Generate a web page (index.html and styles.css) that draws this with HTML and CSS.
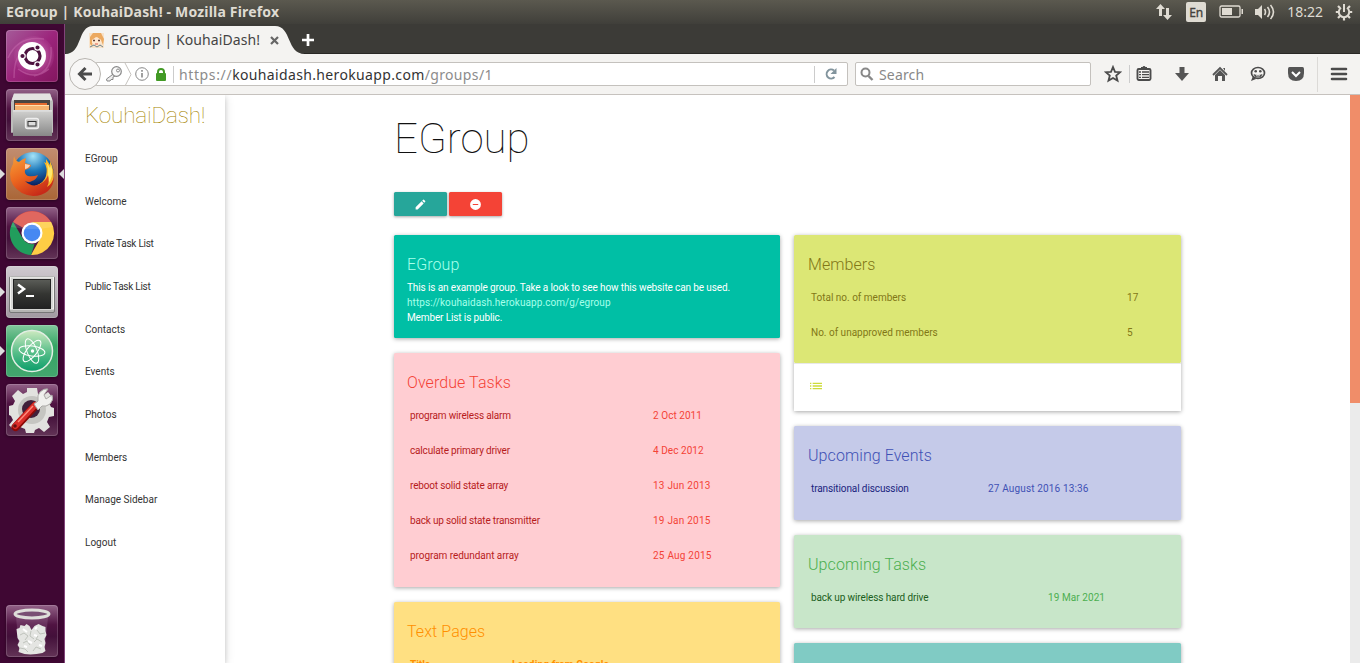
FILE: index.html
```html
<!DOCTYPE html>
<html lang="en">
<head>
<meta charset="utf-8">
<title>EGroup | KouhaiDash!</title>
<link rel="stylesheet" href="styles.css">
</head>
<body>
<svg class="defs" width="0" height="0">
  <defs>
    <linearGradient id="metal" x1="0" y1="0" x2="0" y2="1"><stop offset="0" stop-color="#d2d2d0"/><stop offset="1" stop-color="#888"/></linearGradient>
    <radialGradient id="globe" cx=".5" cy=".1" r=".8"><stop offset="0" stop-color="#a5e3f8"/><stop offset=".45" stop-color="#1c78ba"/><stop offset=".9" stop-color="#0a1d5c"/></radialGradient>
    <linearGradient id="fox" x1="0" y1="0" x2=".6" y2="1"><stop offset="0" stop-color="#f6a13b"/><stop offset=".5" stop-color="#ec671f"/><stop offset="1" stop-color="#c72a18"/></linearGradient>
    <linearGradient id="screen" x1="0" y1="0" x2="0" y2="1"><stop offset="0" stop-color="#5b5d58"/><stop offset=".5" stop-color="#343532"/><stop offset="1" stop-color="#222"/></linearGradient>
    <linearGradient id="atom" x1="0" y1="0" x2="0" y2="1"><stop offset="0" stop-color="#cdeac0"/><stop offset=".55" stop-color="#55bd88"/><stop offset="1" stop-color="#0a9d6a"/></linearGradient>
    <radialGradient id="swirl"><stop offset="0" stop-color="#e6a2d4"/><stop offset="1" stop-color="#c45aa8" stop-opacity=".15"/></radialGradient>
  </defs>
</svg>
<div class="desktop">
  <header class="panel">
    <span class="panel-title">EGroup | KouhaiDash! - Mozilla Firefox</span>
    <div class="tray">
      <svg class="net" width="18" height="18" viewBox="0 0 18 18" fill="#dfdbd2"><path d="M5.500 1 1 6h3v7h3V6h3zM12.500 17 8 12h3V5h3v7h3z"/></svg>
      <span class="lang">En</span>
      <svg class="bat" width="25" height="14" viewBox="0 0 25 14"><rect x="1" y="1" width="20" height="11" rx="1.500" fill="none" stroke="#dfdbd2" stroke-width="1.300"/><path d="M3 3h10v7H3zM22.500 4h1.500v5h-1.500z" fill="#dfdbd2"/></svg>
      <svg class="vol" width="21" height="18" viewBox="0 0 21 18"><path d="M1 6h3l4-4v14l-4-4H1z" fill="#dfdbd2"/><path d="M10.500 6q2 3 0 6M13.500 4q4 5 0 10M16.500 2q6 7 0 14" fill="none" stroke="#dfdbd2" stroke-width="1.600"/></svg>
      <span class="clock">18:22</span>
      <svg class="cog" width="18" height="18" viewBox="0 0 18 18" fill="none" stroke="#dfdbd2"><path d="M6 4.800a5.200 5.200 0 1 0 6 0" stroke-width="2"/><path d="M9 1v8" stroke-width="2"/><path d="m3 3 2 2M15 3l-2 2M.8 9h3M14.200 9h3M3 15l2-2M15 15l-2-2M9 14v3.500" stroke-width="2.200"/></svg>
    </div>
  </header>

  <nav class="launcher">
    <div class="tile dash"><svg viewBox="0 0 52 52"><circle cx="28" cy="26" r="20" fill="url(#swirl)"/><path d="M2 28Q12 5 38 9M8 48Q8 30 14 24M28 46Q47 42 45 17M12 39Q28 51 43 39" fill="none" stroke="#d782bd" stroke-width="1.500" opacity=".35"/><circle cx="26" cy="26" r="14" fill="#fff"/><circle cx="26.500" cy="26" r="7.500" fill="none" stroke="#4d123f" stroke-width="3.200"/><g fill="#4d123f" stroke="#fff" stroke-width="1.200"><circle cx="16.500" cy="26" r="2.700"/><circle cx="31.500" cy="17.500" r="2.700"/><circle cx="31.500" cy="34.500" r="2.700"/></g></svg></div>
    <div class="tile glass"><svg viewBox="0 0 52 52"><path d="m8 5 36-.2 3 8v31H5V13z" fill="#bdbdbb"/><path d="m8 4.500 36 0 2.500 7H5.500z" fill="#e3e3e1"/><path d="M8 11h36v12H8z" fill="#4a4541"/><path d="M9 14h32v8H9z" fill="#e46a2d"/><path d="M9 17h34v6H9z" fill="#f6b36f"/><path d="M9 16.500h34" stroke="#ffe1af"/><path d="M7 21h39v26H7z" fill="url(#metal)"/><path d="M7 21h39v1.800H7z" fill="#ddd"/><rect x="19.500" y="29.500" width="13" height="10" rx="2" fill="#c9c9c8" stroke="#eee" stroke-width="1.300"/><rect x="22" y="32.500" width="8" height="4.500" fill="#ddd" stroke="#333"/></svg></div>
    <div class="tile brown"><svg viewBox="0 0 52 52"><circle cx="27" cy="24.500" r="20.500" fill="url(#globe)"/><path d="m40 11 4 6v-4q5 10 3 19-2 10-12 14l-6-8q9-3 11-10 2-8-2-14l2 1z" fill="#f8b72a"/><path d="m41 15 3 5 1-3q3 8-1 16l-6 7q6-12 3-25z" fill="#ffe96a"/><path d="M8 8q1 5 5 6 3-3 7-4l-1 5 6 2q0 3-6 5-1 4 3 6 5 1 10-1-2 5-6 6-3 2-7 0 7 7 15 3 6-3 8-9 2 7-1 12 5-3 7-10 0 8-6 14-6 5-15 5-13-1-20-11-6-11 0-21z" fill="url(#fox)"/><path d="m19 16 5 1q-1 3-5 4z" fill="#f9d2b2"/></svg><i class="running"></i><i class="focused"></i></div>
    <div class="tile glass"><svg viewBox="0 0 52 52"><path d="M26 26 7 15A22 22 0 0 1 45 15H26z" fill="#dc5148"/><path d="M26 15h19.200A22 22 0 0 1 25 48l9.500-17z" fill="#fecd45"/><path d="M7 14.700 16.500 31q4 7 12 6L25 48A22 22 0 0 1 7 14.700z" fill="#219d5c"/><circle cx="26" cy="26" r="10.500" fill="#fff"/><circle cx="26" cy="26" r="8.300" fill="#4688f2"/><path d="M5 20A22 22 0 0 1 47 20Q26 24 5 20z" fill="#fff" opacity=".13"/></svg></div>
    <div class="tile gray"><svg viewBox="0 0 52 52"><rect x="3.500" y="10.500" width="45" height="36" rx="1.500" fill="#b5b5b3" stroke="#777"/><rect x="4.500" y="11" width="43" height="32" fill="#d7d7d5" stroke="#f2f2ef"/><rect x="7.500" y="13.500" width="37" height="29" fill="url(#screen)" stroke="#222"/><path d="m12 18.500 6 4.500-6 4.500" fill="none" stroke="#fff" stroke-width="2.500"/><path d="M20 30h8" stroke="#fff" stroke-width="2"/></svg><i class="running"></i></div>
    <div class="tile green"><svg viewBox="0 0 52 52"><circle cx="26" cy="26" r="20.500" fill="url(#atom)" stroke="#e2eee3" stroke-width="1.500"/><g fill="none" stroke="#fff" stroke-width="1"><ellipse cx="26" cy="26" rx="13" ry="5" transform="rotate(8 26 26)"/><ellipse cx="26" cy="26" rx="13" ry="5" transform="rotate(68 26 26)"/><ellipse cx="26" cy="26" rx="13" ry="5" transform="rotate(128 26 26)"/></g><circle cx="26.500" cy="26" r="1.700" fill="#fff"/></svg><i class="running"></i></div>
    <div class="tile glass"><svg viewBox="0 0 52 52"><path d="M21 4h10l1 6 5 2 5-4 5 6-4 5 2 4 3 1v8l-5 1-2 5 3 5-6 5-5-4-4 2-1 3h-8l-1-4-5-2-5 4-6-6 4-5-2-4-2-1v-9l4-1 2-4-3-5 6-6 5 4 4-2z" fill="#e2e2df"/><circle cx="26" cy="26" r="14" fill="#c5c5c1"/><circle cx="25" cy="25" r="9" fill="#41203a"/><path d="M9.500 43 29 22" stroke="#8b0907" stroke-width="8" stroke-linecap="round"/><path d="M9.500 42 29 21" stroke="#d92d29" stroke-width="6" stroke-linecap="round"/><path d="m12 38 15-16" stroke="#ff8b7b" stroke-width="1.500"/><circle cx="9" cy="42" r="1.800" fill="#641212"/><path d="m28 20 4-3q-1-6 2-9 4-4 8-3l-4 6 2 4 6-4q2 5-2 9-4 3-8 2l-4 4z" fill="#f0f0ee" stroke="#aaa9a6"/></svg></div>
    <div class="tile glass trash"><svg viewBox="0 0 52 52"><path d="m10 12 3 32q13 6 26 0l3-32z" fill="#bb91b4" opacity=".22"/><path d="m10.500 24 3-1 1-3 4 1 2-2 3 2 2 4 3-4 4-2 4 2 3 1v4l1 4-2 4 1 4-1 4 1 4-3 2-6 1-6 .5-6-.5-6-2 1-4-2-3 2-4-2-3z" fill="#e4e5e2"/><path d="m14 30 4-2 4 3-3 4M25 26l-1 5 4 3M31 25l3 4 5-1M17 38l4-2 3 4M28 37l3-3 5 3M14 43l5 1 3 3M27 46l3-4 5 2M32 31l-2 3" fill="none" stroke="#bfc3bc" stroke-width="1"/><path d="m17 24 4 3M29 24l2-2M28 30l3 1M22 36l4 2M33 40l3 1M18 41l3 1" stroke="#fff" stroke-width="2"/><ellipse cx="26" cy="9" rx="17" ry="4" fill="#795074" stroke="#dededa" stroke-width="3"/></svg></div>
  </nav>

  <div class="browser">
    <div class="tabs">
      <svg class="tab-shape" width="240" height="30" viewBox="0 0 240 30" preserveAspectRatio="none"><path d="M0 30C18 30 12 2 28 2H210C227 2 221 30 240 30z" fill="#f4f3f1"/></svg>
      <div class="tab">
        <svg width="17" height="17" viewBox="0 0 17 17"><path d="M1 1h15v15H1z" fill="#f7e3cb"/><path d="M2 12V5l3-4h8l3 6-1 6-2-5-4-3-4 4-1 5z" fill="#eca960"/><path d="M4 8l4-3 5 3v3l-4 3-5-3z" fill="#ffe7cf"/><path d="M5 8.500h2M10 8.500h2" stroke="#5e3e38" stroke-width="1.600"/><path d="M7 12h3" stroke="#d85d4c"/><path d="m2 15 4-2 3 2 3-2 3 2" stroke="#71848b" fill="none"/></svg>
        <span class="tab-name">EGroup | KouhaiDash!</span>
        <svg class="close" width="9" height="9" viewBox="0 0 9 9"><path d="m1 1 7 7M8 1 1 8" stroke="#666" stroke-width="2.200"/></svg>
      </div>
      <svg class="plus" width="14" height="14" viewBox="0 0 14 14"><path d="M7 1v12M1 7h12" stroke="#fff" stroke-width="2.700"/></svg>
    </div>
    <div class="toolbar">
      <div class="back"><svg width="16" height="16" viewBox="0 0 16 16"><path d="M15 8H3M8.500 2 2.500 8l6 6" fill="none" stroke="#4b4b4b" stroke-width="3"/></svg></div>
      <div class="address">
        <svg class="key" width="18" height="18" viewBox="0 0 18 18"><path d="M9 8.500 1.500 14l.5 2h3l1-1.500h2V12l3-1.500" fill="#eee" stroke="#888"/><circle cx="11.500" cy="6.500" r="4.800" fill="#fafafa" stroke="#888" stroke-width="1.200"/><circle cx="13" cy="5.500" r="1.500" fill="none" stroke="#888"/></svg>
        <svg class="chevron" width="8" height="23" viewBox="0 0 8 23"><path d="m1 0 6 11.500L1 23" fill="none" stroke="#c5c2be"/></svg>
        <svg class="info" width="14" height="14" viewBox="0 0 14 14"><circle cx="7" cy="7" r="6.300" fill="none" stroke="#888"/><path d="M7 6v4.500M7 3v1.800" stroke="#888" stroke-width="1.600"/></svg>
        <svg class="lock" width="12" height="13" viewBox="0 0 12 13"><path d="M3 6V4a3 3 0 0 1 6 0v2" fill="none" stroke="#429a25" stroke-width="2"/><rect x="1" y="5" width="10" height="8" rx="1" fill="#429a25"/></svg>
        <span class="url"><span class="scheme">https://</span><b>kouhaidash.herokuapp.com</b>/groups/1</span>
        <div class="reload"><svg width="14" height="14" viewBox="0 0 14 14"><path d="M10.500 10A4.500 4.500 0 1 1 10 3.500" fill="none" stroke="#82949d" stroke-width="2"/><path d="M12.500 1v6h-6z" fill="#82949d"/></svg></div>
      </div>
      <div class="search"><svg width="14" height="14" viewBox="0 0 14 14"><circle cx="5.500" cy="5.500" r="4" fill="none" stroke="#888" stroke-width="2"/><path d="m8.500 9 4 4" stroke="#888" stroke-width="2.400"/></svg><span>Search</span></div>
      <div class="tools">
        <svg viewBox="0 0 18 18"><path d="m9 2 2 4.800 5.200.4-4 3.400 1.300 5L9 13l-4.500 2.600 1.300-5-4-3.400L7 6.800z" fill="none" stroke="#4b4b4b" stroke-width="1.800"/></svg>
        <svg viewBox="0 0 18 18"><rect x="2.500" y="4" width="13" height="11" rx="1.200" fill="none" stroke="#4b4b4b" stroke-width="1.900"/><path d="M6 4V2h1.500l1-1h1l1 1H12v2z" fill="#4b4b4b"/><path d="M4 7h2M7 7h7M4 9.700h2m1 0h7M4 12.400h2m1 0h7" stroke="#4b4b4b" stroke-width="1.300"/></svg>
        <svg viewBox="0 0 18 18"><path d="M6.500 2h5v6H16l-7 8-7-8h4.500z" fill="#555"/></svg>
        <svg viewBox="0 0 18 18"><path d="m2 10 7-7 7 7" fill="none" stroke="#555" stroke-width="1.800"/><path d="m4 10 5-5 5 5v6h-3v-5H7v5H4z" fill="#555"/><path d="M12 3h2v3z" fill="#555"/></svg>
        <svg viewBox="0 0 18 18"><ellipse cx="9" cy="8" rx="6.500" ry="5.500" fill="none" stroke="#4b4b4b" stroke-width="1.700"/><path d="m4 11-2 5 5-2" fill="#4b4b4b"/><circle cx="6.700" cy="6.300" r="1.300" fill="#4b4b4b"/><circle cx="11.300" cy="6.300" r="1.300" fill="#4b4b4b"/><path d="M4.500 9q4.500 2 9 0-1 3.500-4.500 3.500T4.500 9z" fill="#4b4b4b"/><path d="M7 10.700q2 .6 4 0" stroke="#fff" fill="none" stroke-width=".8"/></svg>
        <svg viewBox="0 0 18 18"><path d="M2.500 2h13Q17 2 17 4v4q0 8-8 8T1 8V4q0-2 1.500-2z" fill="#555"/><path d="m5 7 4 4 4-4" fill="none" stroke="#fff" stroke-width="2"/></svg>
      </div>
      <div class="menu"><svg width="18" height="16" viewBox="0 0 18 16"><path d="M2 3h14M2 8h14M2 13h14" stroke="#4b4b4b" stroke-width="2.600" stroke-linecap="round"/></svg></div>
    </div>

    <div class="page">
      <aside class="sidebar">
        <div class="brand">KouhaiDash!</div>
        <a>EGroup</a><a>Welcome</a><a class="tight">Private Task List</a><a class="tight">Public Task List</a><a>Contacts</a><a>Events</a><a>Photos</a><a>Members</a><a>Manage Sidebar</a><a>Logout</a>
      </aside>
      <main class="content">
        <h1>EGroup</h1>
        <div class="buttons">
          <span class="btn edit"><svg width="13" height="13" viewBox="0 0 24 24" fill="#fff"><path d="M3 17.250V21h3.750L17.810 9.940l-3.750-3.750L3 17.250zM20.710 7.040a1 1 0 0 0 0-1.410l-2.340-2.340a1 1 0 0 0-1.410 0l-1.830 1.830 3.750 3.750 1.830-1.830z"/></svg></span>
          <span class="btn remove"><svg width="13" height="13" viewBox="0 0 24 24" fill="#fff"><path d="M12 2a10 10 0 1 0 0 20 10 10 0 0 0 0-20zm5 11H7v-2h10v2z"/></svg></span>
        </div>
        <div class="columns">
          <div class="column">
            <section class="card teal"><h2>EGroup</h2><p>This is an example group. Take a look to see how this website can be used.</p><p class="link">https://kouhaidash.herokuapp.com/g/egroup</p><p>Member List is public.</p></section>
            <section class="card red"><h2>Overdue Tasks</h2>
              <div class="row"><span>program wireless alarm</span><span>2 Oct 2011</span></div>
              <div class="row"><span>calculate primary driver</span><span>4 Dec 2012</span></div>
              <div class="row"><span>reboot solid state array</span><span class="wide">13 Jun 2013</span></div>
              <div class="row"><span>back up solid state transmitter</span><span class="wide">19 Jan 2015</span></div>
              <div class="row"><span class="loose">program redundant array</span><span class="wide">25 Aug 2015</span></div>
            </section>
            <section class="card amber"><h2>Text Pages</h2><div class="row head"><span>Title</span><span>Loading from Google</span></div></section>
          </div>
          <div class="column">
            <div class="stack">
              <section class="card lime"><h2>Members</h2>
                <div class="row"><span>Total no. of members</span><span>17</span></div>
                <div class="row"><span>No. of unapproved members</span><span>5</span></div>
              </section>
              <div class="action"><svg width="16" height="16" viewBox="0 0 24 24" fill="#cddc39"><path d="M3 13h2v-2H3v2zm0 4h2v-2H3v2zm0-8h2V7H3v2zm4 4h14v-2H7v2zm0 4h14v-2H7v2zM7 7v2h14V7H7z"/></svg></div>
            </div>
            <section class="card indigo"><h2>Upcoming Events</h2><div class="row"><span>transitional discussion</span><span>27 August 2016 13:36</span></div></section>
            <section class="card green-card"><h2>Upcoming Tasks</h2><div class="row"><span>back up wireless hard drive</span><span>19 Mar 2021</span></div></section>
            <section class="card cyan"></section>
          </div>
        </div>
      </main>
      <div class="scroll"><div class="thumb"></div></div>
    </div>
  </div>
</div>
</body>
</html>
```
FILE: styles.css
```css
* { box-sizing: border-box; }
body { margin: 0; font-family: Roboto, sans-serif; overflow: hidden; }
svg { display: block; flex: none; }
.defs { position: absolute; }
.desktop { width: 1360px; height: 663px; display: grid; grid-template: 24px 639px / 65px 1295px; overflow: hidden; }

.panel { grid-column: 1 / 3; display: flex; align-items: center; justify-content: space-between; padding: 0 7px 0 6px; background: linear-gradient(#5b594f, #403f3a); color: #dfdbd2; font: 14px/24px "Noto Sans", sans-serif; }
.panel-title { font-weight: 700; letter-spacing: 0.18px; white-space: nowrap; }
.tray { display: flex; align-items: center; }
.lang { width: 20px; height: 20px; border-radius: 2px; background: #dfdbd2; color: #44423d; font-size: 12px; line-height: 21px; text-align: center; margin: 0 13px 0 13px; -webkit-text-stroke: .3px #44423d; }
.vol { margin-left: 10px; }
.clock { margin: 0 12px; letter-spacing: 0; }

.launcher { display: flex; flex-direction: column; gap: 7px; padding: 6px 0 6px 6px; background: #3f0733; border-right: 1px solid #82447a; }
.tile { position: relative; width: 52px; height: 52px; flex: none; border-radius: 4px; box-shadow: inset 0 0 0 1px rgba(255,255,255,.16), 0 1px 3px rgba(0,0,0,.35); }
.tile > svg { width: 52px; height: 52px; }
.dash { background: linear-gradient(135deg, #a55b99, #9c257c 50%, #83165f); }
.glass { background: linear-gradient(#936288, #501342 38%, #43103a 60%, #633457); }
.brown { background: linear-gradient(#c28d70, #aa6637); }
.gray { background: linear-gradient(#d0cad0, #a19aa1); }
.green { background: linear-gradient(#83c79d, #35a565 40%, #43a66e); }
.trash { margin-top: auto; }
.running, .focused { position: absolute; top: 21px; border: 5px solid transparent; }
.running { left: -6px; border-left-color: #ddd; border-right: 0; }
.focused { right: -6px; border-right-color: #ddd; border-left: 0; }

.browser { display: grid; grid-template-rows: 30px 41px 568px; }
.tabs { position: relative; background: #3c3b37; border-bottom: 1px solid #292825; }
.tab-shape { position: absolute; left: 0; top: 0; }
.tab { position: relative; display: flex; align-items: center; height: 30px; padding: 2px 0 0 23px; width: 240px; }
.tab-name { margin-left: 6px; width: 158px; color: #444; font: 14px/24px "Noto Sans", sans-serif; letter-spacing: 0.09px; white-space: nowrap; }
.close { margin-left: 1px; }
.plus { position: absolute; left: 236px; top: 9px; }

.toolbar { display: flex; align-items: center; background: #f4f3f1; border-bottom: 1px solid #c6c2be; padding-left: 4px; font: 14px/22px "Noto Sans", sans-serif; }
.back { position: relative; z-index: 1; width: 32px; height: 32px; flex: none; border: 1px solid #b8b5b0; border-radius: 50%; display: grid; place-items: center; background: #f8f7f6; }
.address, .search { height: 24px; border: 1px solid #c4c1bd; border-radius: 2px; background: #fff; display: flex; align-items: center; }
.address { margin-left: -6px; width: 753px; padding-left: 9px; }
.chevron { margin-left: 1px; }
.info { margin-left: 3px; }
.lock { margin-left: 6px; }
.url { margin-left: 6px; border-left: 1px solid #ccc; padding-left: 5px; line-height: 17px; color: #8c8c8c; white-space: nowrap; letter-spacing: .35px; }
.scheme { letter-spacing: .62px; }
.url b { color: #333; font-weight: 400; }
.reload { margin-left: auto; height: 17px; width: 33px; border-left: 1px solid #ccc; display: grid; place-items: center; }
.search { width: 236px; margin-left: 7px; padding-left: 4px; gap: 5px; color: #888; }
.search span { padding-top: 1px; letter-spacing: .15px; }
.tools { display: flex; gap: 20px; margin-left: 13px; }
.tools svg { width: 18px; height: 18px; }
.tools svg:nth-child(2) { margin-left: -7px; box-shadow: -5px 0 0 #f4f3f1, -6px 0 0 #ccc; }
.menu { margin-left: 12px; height: 35px; width: 42px; border-left: 1px solid #dcdad7; display: grid; place-items: center; }

.page { display: grid; grid-template-columns: 160px 1fr 10px; background: #fff; overflow: hidden; }
.sidebar { display: flex; flex-direction: column; padding-left: 20px; box-shadow: 0 2px 5px rgba(0,0,0,.16), 0 2px 10px rgba(0,0,0,.12); font-size: 10px; color: #333; }
.brand { height: 43px; line-height: 41px; font-size: 22.5px; font-weight: 100; letter-spacing: -.16px; color: #a68500; }
.sidebar a { height: 42.67px; line-height: 42.67px; flex: none; letter-spacing: 0; }
.sidebar .tight { letter-spacing: -.26px; }
.content { padding-left: 169px; font-size: 10px; overflow: hidden; }
h1 { margin: 19px 0 0; font-size: 42px; line-height: 50px; font-weight: 100; color: #111; }
.buttons { display: flex; gap: 2px; margin-top: 28px; }
.btn { width: 53px; height: 24px; border-radius: 1.500px; display: grid; place-items: center; box-shadow: 0 1px 3px rgba(0,0,0,.35); }
.edit { background: #26a69a; }
.remove { background: #f44336; }
.columns { display: grid; grid-template-columns: 386px 387px; gap: 14px; margin-top: 19px; }
.column { display: flex; flex-direction: column; gap: 14.670px; }
.column:last-child { --inset: 14px; }
.card { padding: 13.330px 13px 13.330px var(--inset, 13px); border-radius: 1.500px; box-shadow: 0 1px 4px rgba(0,0,0,.35); }
h2 { margin: 0; padding-top: 1px; height: 32px; font-size: 16px; line-height: 32px; font-weight: 300; letter-spacing: .08px; }
p { margin: 0; line-height: 15px; white-space: nowrap; letter-spacing: -.122px; }
.row { display: grid; grid-template-columns: var(--first) 1fr; padding-left: 3px; height: 35px; line-height: 35px; white-space: nowrap; }
.row span + span { letter-spacing: .15px; }
.teal { background: #00bfa5; color: #fff; padding-bottom: 12.670px; }
.teal + .card { margin-top: .3px; }
.teal h2, .link { color: #a7ffeb; }
.link { letter-spacing: .07px; }
.red { --first: 243px; background: #ffcdd2; color: #b71c1c; }
.red h2, .red .row span + span { color: #f44336; }
.red .row { letter-spacing: -.17px; }
.red .row span + span { letter-spacing: .05px; }
.red .row .wide { letter-spacing: .22px; }
.red .loose { letter-spacing: -.05px; }
.amber { --first: 102px; background: #ffe082; color: #ff8f00; margin-top: .36px; }
.head { font-weight: 700; }
.lime { --first: 316px; background: #dce775; color: #827717; padding-bottom: 12.670px; }
.lime .row { letter-spacing: 0; }
.stack { box-shadow: 0 1px 4px rgba(0,0,0,.35); border-radius: 1.500px; }
.stack .card { box-shadow: none; }
.action { height: 48.400px; padding: 14px 0 0 14px; border-top: 1px solid #e8e8e8; background: #fff; }
.indigo { --first: 177px; background: #c5cae9; color: #1a237e; letter-spacing: -.11px; }
.indigo h2, .indigo .row span + span { color: #3f51b5; }
.green-card { --first: 237px; background: #c8e6c9; color: #1b5e20; letter-spacing: -.11px; margin-top: .26px; }
.green-card h2, .green-card .row span + span { color: #4caf50; }
.green-card .row span + span { letter-spacing: .07px; }
.cyan { height: 100px; background: #80cbc4; }
.scroll { background: #ebebeb; }
.thumb { height: 308px; background: #f08d69; }
```
